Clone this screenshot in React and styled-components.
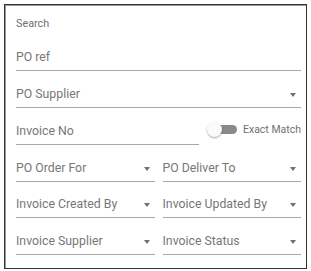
import React from "react";
import styled, { createGlobalStyle } from "styled-components";

const Global = createGlobalStyle`
  body {
    margin: 0;
    background: #ffffff;
    font-family: Roboto, "Liberation Sans", sans-serif;
  }
`;

const Panel = styled.div`
  margin: 4px;
  width: 303px;
  height: 265px;
  box-sizing: border-box;
  border: 1px solid #333;
  box-shadow: inset 1px 1px 0 #9a9a9a;
  padding: 10px 5px 0 11px;
  display: flex;
  flex-direction: column;
  gap: 11.9px;
`;

const Title = styled.div`
  font-size: 10.8px;
  line-height: 13px;
  color: #707070;
  margin-top: 2px;
  margin-bottom: 4px;
`;

const Field = styled.div`
  flex: none;
  min-width: 0;
  height: 25px;
  display: flex;
  align-items: flex-end;
  justify-content: space-between;
  padding-bottom: 5px;
  box-sizing: border-box;
  border-bottom: 1px solid #a8a8a8;
  font-size: 12.3px;
  line-height: 15px;
  color: #777777;
  white-space: nowrap;
`;

const Row = styled.div`
  display: flex;
  align-items: flex-end;
  gap: ${(p) => p.gap || 8}px;

  & > ${Field} {
    flex: 1 1 0;
  }
`;

const Arrow = styled.span`
  width: 0;
  height: 0;
  margin: 0 5px 5px 0;
  border-left: 3.5px solid transparent;
  border-right: 3.5px solid transparent;
  border-top: 4px solid #707070;
`;

const Toggle = styled.label`
  flex: none;
  display: flex;
  align-items: center;
  gap: 6px;
  font-size: 10.5px;
  color: #707070;
  height: 25px;
  padding-bottom: 6px;
  box-sizing: border-box;
  white-space: nowrap;
`;

const Track = styled.span`
  position: relative;
  width: 29px;
  height: 9px;
  border-radius: 5px;
  background: #8a8a8a;
`;

const Thumb = styled.span`
  position: absolute;
  left: -1px;
  top: -3px;
  width: 15px;
  height: 15px;
  border-radius: 50%;
  background: #fafafa;
  box-shadow: 0 1px 2px rgba(0, 0, 0, 0.35);
`;

const Select = ({ label }) => (
  <Field>
    {label}
    <Arrow />
  </Field>
);

export default function App() {
  return (
    <>
      <Global />
      <Panel>
        <Title>Search</Title>
        <Field>PO ref</Field>
        <Select label="PO Supplier" />
        <Row gap={9}>
          <Field>Invoice No</Field>
          <Toggle>
            <Track>
              <Thumb />
            </Track>
            Exact Match
          </Toggle>
        </Row>
        <Row>
          <Select label="PO Order For" />
          <Select label="PO Deliver To" />
        </Row>
        <Row>
          <Select label="Invoice Created By" />
          <Select label="Invoice Updated By" />
        </Row>
        <Row>
          <Select label="Invoice Supplier" />
          <Select label="Invoice Status" />
        </Row>
      </Panel>
    </>
  );
}
